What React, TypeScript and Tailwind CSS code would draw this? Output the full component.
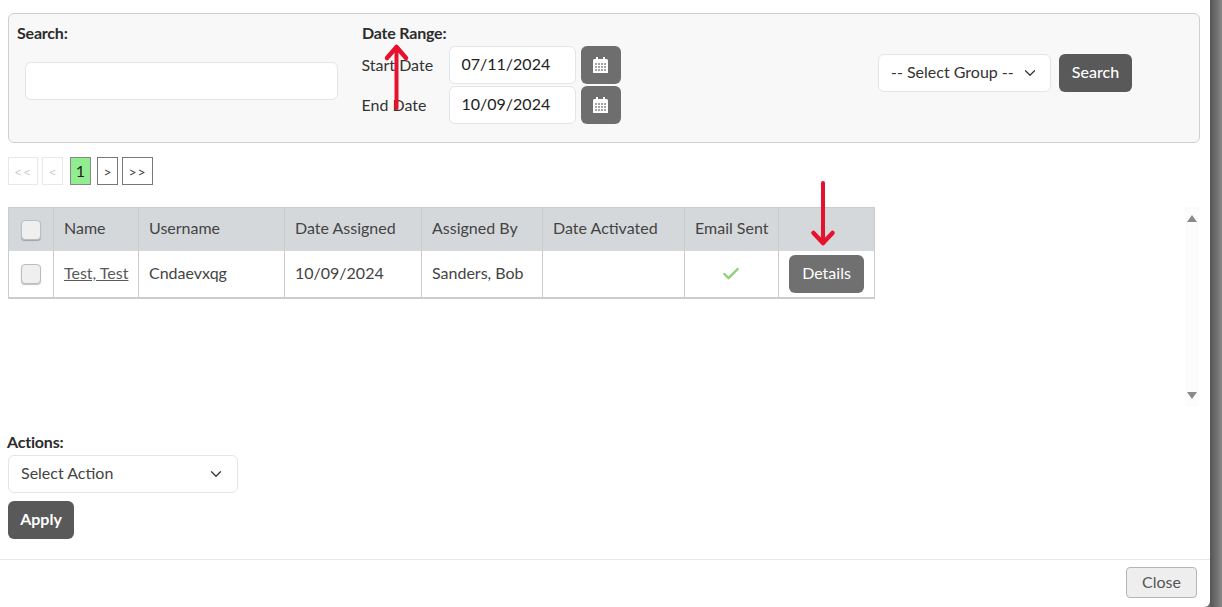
import React from 'react';
import { ChevronDown, Check } from 'lucide-react';

const CalendarIcon = () => (
  <svg width="15" height="16" viewBox="0 0 15 16" fill="none">
    <rect x="3" y="0" width="2" height="3" fill="#fff" />
    <rect x="10" y="0" width="2" height="3" fill="#fff" />
    <path d="M0 3.5a1.5 1.5 0 0 1 1.5-1.5h12a1.5 1.5 0 0 1 1.5 1.5V16H0z" fill="#fff" />
    {[6, 9, 12].map((y) =>
      [2, 5, 8, 11].map((x) => <rect key={`${x}-${y}`} x={x} y={y} width="2" height="2" fill="#a5a5a5" />)
    )}
  </svg>
);

const DateRow = ({ label, value }: { label: string; value: string }) => (
  <div className="flex items-center h-[38px]">
    <span className="w-[87px] text-[16px] text-[#333] pb-[1px] -ml-[0.5px]">{label}</span>
    <div className="w-[127px] h-[38px] bg-white border border-[#e4e4ea] rounded-[6px] flex items-center pl-[12px] text-[16px] text-[#222] pb-[2px]">
      {value}
    </div>
    <button className="ml-[5px] w-[40px] h-[38px] bg-[#6e6e6e] rounded-[6px] flex items-center justify-center">
      <CalendarIcon />
    </button>
  </div>
);

const PageBox = ({ text, className }: { text: string; className: string }) => (
  <div className={`h-[28px] flex items-center justify-center border text-[14px] ${className}`}>{text}</div>
);

const headers = [
  { label: 'Name', w: 'w-[85px]' },
  { label: 'Username', w: 'w-[146px]' },
  { label: 'Date Assigned', w: 'w-[137px]' },
  { label: 'Assigned By', w: 'w-[121px]' },
  { label: 'Date Activated', w: 'w-[142px]' },
  { label: 'Email Sent', w: 'w-[94px]' },
];

const Checkbox = () => (
  <div className="w-[20px] h-[20px] rounded-[4px] bg-[#efefef] border border-[#bdbdbd] shadow-[0_1px_1px_rgba(0,0,0,0.25)]" />
);

export default function App() {
  return (
    <div className="h-[607px] w-[1222px] flex overflow-hidden bg-[#777] text-[#333]" style={{ fontFamily: 'Lato, "Open Sans", sans-serif' }}>
      <div className="w-[1210px] h-full bg-white rounded-br-[6px] flex flex-col">
        <div className="flex-1 pt-[13px] pl-[8px] pr-[10px]">
          {/* filter panel */}
          <div className="h-[130px] bg-[#f8f8f8] border border-[#cfcfcf] rounded-[6px] flex">
            <div className="w-[353px] pl-[8px] pt-[9px]">
              <div className="text-[16px] font-bold leading-[20px] text-[#2c2c2c] tracking-[-0.2px]">Search:</div>
              <div className="ml-[8px] mt-[19px] w-[313px] h-[38px] bg-white border border-[#e4e4ea] rounded-[6px]" />
            </div>
            <div className="w-[516px] pt-[9px]">
              <div className="text-[16px] font-bold leading-[20px] text-[#2c2c2c] tracking-[-0.2px]">Date Range:</div>
              <div className="mt-[3px] flex flex-col gap-[2px]">
                <DateRow label="Start Date" value="07/11/2024" />
                <DateRow label="End Date" value="10/09/2024" />
              </div>
            </div>
            <div className="pt-[40px] flex items-start">
              <div className="w-[173px] h-[38px] bg-white border border-[#e4e4ea] rounded-[6px] flex items-center justify-between pl-[12px] pr-[11px] pb-[2px] text-[16px] text-[#333]">
                <span>-- Select Group --</span>
                <ChevronDown size={18} strokeWidth={1.6} className="text-[#333] mt-[2px]" />
              </div>
              <button className="ml-[8px] w-[73px] h-[38px] bg-[#595959] rounded-[6px] text-white text-[16px] font-medium pb-[2px]">Search</button>
            </div>
          </div>

          {/* pager */}
          <div className="mt-[14px] flex items-center">
            <PageBox text="<<" className="w-[30px] border-[#e8e8e8] text-[#ccc] tracking-[1px]" />
            <PageBox text="<" className="w-[21px] ml-[4px] border-[#e8e8e8] text-[#ccc]" />
            <div className="w-[21px] h-[28px] ml-[7px] flex items-center justify-center bg-[#90ee90] border border-[#888] text-[16px] text-[#222]">1</div>
            <PageBox text=">" className="w-[21px] ml-[6px] border-[#777] text-[#444]" />
            <PageBox text=">>" className="w-[31px] ml-[4px] border-[#777] text-[#444] tracking-[1px]" />
          </div>

          {/* table + scrollbar */}
          <div className="mt-[22px] flex items-start">
            <div className="w-[867px] border border-[#cccccc] border-b-2 text-[16px] text-[#444]">
              <div className="flex h-[43px] bg-[#d5d8db]">
                <div className="w-[45px] border-r border-[#cccccc] flex items-center justify-center pr-[1px]">
                  <Checkbox />
                </div>
                {headers.map((h) => (
                  <div key={h.label} className={`${h.w} border-r border-[#cccccc] flex items-center pl-[10px] pb-[3px]`}>
                    {h.label}
                  </div>
                ))}
                <div className="flex-1" />
              </div>
              <div className="flex h-[46px] bg-white">
                <div className="w-[45px] border-r border-[#cccccc] flex items-center justify-center pr-[1px]">
                  <Checkbox />
                </div>
                <div className="w-[85px] border-r border-[#cccccc] flex items-center pl-[10px] pb-[2px] underline text-[#5a5a5a]">Test, Test</div>
                <div className="w-[146px] border-r border-[#cccccc] flex items-center pl-[10px] pb-[2px]">Cndaevxqg</div>
                <div className="w-[137px] border-r border-[#cccccc] flex items-center pl-[10px] pb-[2px]">10/09/2024</div>
                <div className="w-[121px] border-r border-[#cccccc] flex items-center pl-[10px] pb-[2px]">Sanders, Bob</div>
                <div className="w-[142px] border-r border-[#cccccc]" />
                <div className="w-[94px] border-r border-[#cccccc] flex items-center justify-center pr-[1px]">
                  <Check size={20} strokeWidth={2.9} className="text-[#8fd07a]" />
                </div>
                <div className="flex-1 flex items-center justify-center">
                  <button className="w-[75px] h-[38px] bg-[#707070] rounded-[6px] text-white text-[16px] pb-[2px]">Details</button>
                </div>
              </div>
            </div>
            <div className="ml-[310px] w-[14px] h-[200px] bg-[#fcfcfc] flex flex-col justify-between items-center py-[8px]">
              <div className="w-0 h-0 border-x-[5px] border-x-transparent border-b-[7px] border-b-[#8a8a8a]" />
              <div className="w-0 h-0 border-x-[5px] border-x-transparent border-t-[7px] border-t-[#8a8a8a]" />
            </div>
          </div>

          {/* actions */}
          <div className="mt-[25px]">
            <div className="text-[16px] font-bold leading-[20px] text-[#2c2c2c] tracking-[-0.2px] -ml-[1px]">Actions:</div>
            <div className="mt-[3px] w-[230px] h-[38px] bg-white border border-[#e4e4ea] rounded-[6px] flex items-center justify-between pl-[12px] pr-[12px] pb-[2px] text-[16px] text-[#444]">
              <span>Select Action</span>
              <ChevronDown size={18} strokeWidth={1.6} className="text-[#333] mt-[2px]" />
            </div>
            <button className="mt-[8px] w-[66px] h-[38px] bg-[#595959] rounded-[6px] text-white text-[16px] font-bold pb-[2px]">Apply</button>
          </div>
        </div>

        {/* footer */}
        <div className="h-[48px] border-t border-[#e9e9e9] flex items-center justify-end pr-[13px] pb-[2px]">
          <button className="w-[71px] h-[31px] bg-[#eeeeee] border border-[#b5b5b5] rounded-[4px] text-[16px] text-[#555] pb-[2px]">Close</button>
        </div>
      </div>
      <div className="flex-1 bg-gradient-to-r from-[#555] to-[#888]" />

      {/* annotation arrows */}
      <svg className="absolute left-0 top-0 pointer-events-none" width="1222" height="607" fill="none" stroke="#e8112d" strokeLinecap="round" strokeLinejoin="round">
        <path d="M396.5 108V48" strokeWidth="4" />
        <path d="M387 58l9.5-11 9.5 11" strokeWidth="4.5" />
        <path d="M823 183v60" strokeWidth="4" />
        <path d="M813.5 233l9.5 10 9.5-10" strokeWidth="4.5" />
      </svg>
    </div>
  );
}
